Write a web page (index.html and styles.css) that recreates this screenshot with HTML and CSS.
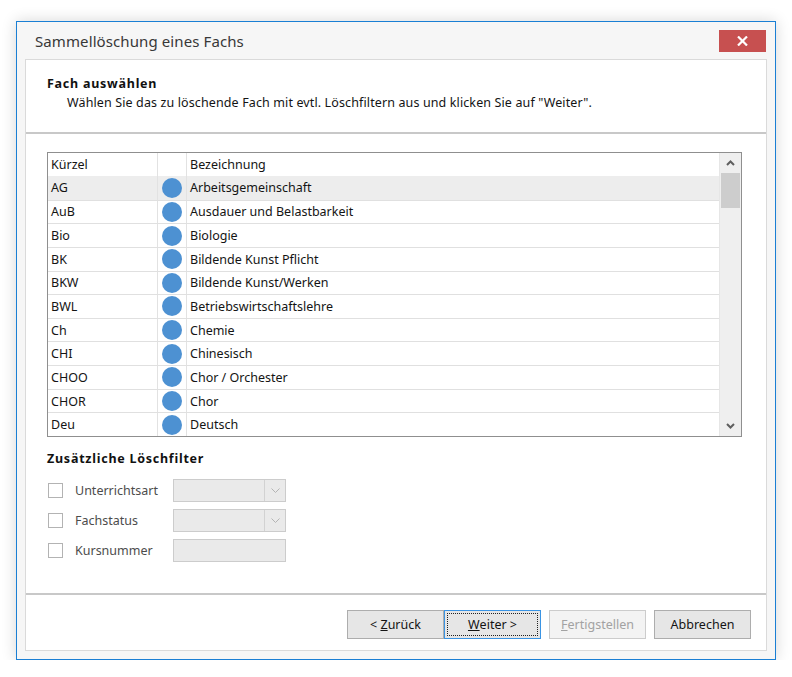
FILE: index.html
```html
<!DOCTYPE html>
<html lang="de">
<head>
    <meta charset="UTF-8">
    <title>Sammellöschung eines Fachs</title>
    <link rel="stylesheet" href="styles.css">
</head>
<body>
    <div class="window">
        <div class="titlebar">
            <span class="title">Sammellöschung eines Fachs</span>
            <button class="close">
                <svg width="11" height="10" viewBox="0 0 11 10"><path d="M1 0.5 L10 9.5 M10 0.5 L1 9.5" stroke="#fff" stroke-width="2.2" fill="none"/></svg>
            </button>
        </div>

        <div class="panel">
            <div class="header">
                <div class="header-title">Fach auswählen</div>
                <div class="header-text">Wählen Sie das zu löschende Fach mit evtl. Löschfiltern aus und klicken Sie auf "Weiter".</div>
            </div>

            <div class="content">
                <div class="grid">
                    <div class="grid-main">
                        <div class="row head"><div class="c-code">Kürzel</div><div class="c-icon"></div><div class="c-name">Bezeichnung</div></div>
                        <div class="row selected"><div class="c-code">AG</div><div class="c-icon"><span class="dot"></span></div><div class="c-name">Arbeitsgemeinschaft</div></div>
                        <div class="row"><div class="c-code">AuB</div><div class="c-icon"><span class="dot"></span></div><div class="c-name">Ausdauer und Belastbarkeit</div></div>
                        <div class="row"><div class="c-code">Bio</div><div class="c-icon"><span class="dot"></span></div><div class="c-name">Biologie</div></div>
                        <div class="row"><div class="c-code">BK</div><div class="c-icon"><span class="dot"></span></div><div class="c-name">Bildende Kunst Pflicht</div></div>
                        <div class="row"><div class="c-code">BKW</div><div class="c-icon"><span class="dot"></span></div><div class="c-name">Bildende Kunst/Werken</div></div>
                        <div class="row"><div class="c-code">BWL</div><div class="c-icon"><span class="dot"></span></div><div class="c-name">Betriebswirtschaftslehre</div></div>
                        <div class="row"><div class="c-code">Ch</div><div class="c-icon"><span class="dot"></span></div><div class="c-name">Chemie</div></div>
                        <div class="row"><div class="c-code">CHI</div><div class="c-icon"><span class="dot"></span></div><div class="c-name">Chinesisch</div></div>
                        <div class="row"><div class="c-code">CHOO</div><div class="c-icon"><span class="dot"></span></div><div class="c-name">Chor / Orchester</div></div>
                        <div class="row"><div class="c-code">CHOR</div><div class="c-icon"><span class="dot"></span></div><div class="c-name">Chor</div></div>
                        <div class="row"><div class="c-code">Deu</div><div class="c-icon"><span class="dot"></span></div><div class="c-name">Deutsch</div></div>
                    </div>
                    <div class="scrollbar">
                        <div class="sb-btn">
                            <svg width="9" height="6" viewBox="0 0 9 6"><path d="M1 5 L4.5 1.5 L8 5" stroke="#5f5f5f" stroke-width="2" fill="none"/></svg>
                        </div>
                        <div class="sb-thumb"></div>
                        <div class="sb-track"></div>
                        <div class="sb-btn">
                            <svg width="9" height="6" viewBox="0 0 9 6"><path d="M1 1 L4.5 4.5 L8 1" stroke="#5f5f5f" stroke-width="2" fill="none"/></svg>
                        </div>
                    </div>
                </div>

                <div class="filters">
                    <div class="filters-title">Zusätzliche Löschfilter</div>
                    <div class="filter-row">
                        <span class="check"></span>
                        <span class="filter-label">Unterrichtsart</span>
                        <span class="combo"><span class="combo-btn"><svg width="9" height="5" viewBox="0 0 9 5"><path d="M0.5 0.5 L4.5 4.5 L8.5 0.5" stroke="#b4b4b4" stroke-width="1" fill="none"/></svg></span></span>
                    </div>
                    <div class="filter-row">
                        <span class="check"></span>
                        <span class="filter-label">Fachstatus</span>
                        <span class="combo"><span class="combo-btn"><svg width="9" height="5" viewBox="0 0 9 5"><path d="M0.5 0.5 L4.5 4.5 L8.5 0.5" stroke="#b4b4b4" stroke-width="1" fill="none"/></svg></span></span>
                    </div>
                    <div class="filter-row">
                        <span class="check"></span>
                        <span class="filter-label">Kursnummer</span>
                        <span class="combo"></span>
                    </div>
                </div>
            </div>

            <div class="buttons">
                <button class="btn">&lt; <u>Z</u>urück</button>
                <button class="btn focused"><span class="focus-ring"><u>W</u>eiter &gt;</span></button>
                <button class="btn disabled"><u>F</u>ertigstellen</button>
                <button class="btn">Abbrechen</button>
            </div>
        </div>
    </div>
</body>
</html>
```

FILE: styles.css
```css
* {
    box-sizing: border-box;
}

body {
    margin: 0;
    background: #ffffff;
    font-family: "Noto Sans", "Open Sans", sans-serif;
    font-size: 12.5px;
    color: #141414;
}

.window {
    margin: 21px 0 0 16px;
    width: 760px;
    height: 639px;
    border: 1px solid #1a7fd4;
    background: #f6f6f6;
    display: flex;
    flex-direction: column;
    box-shadow: 0 0 14px rgba(0, 0, 0, 0.16);
}

.titlebar {
    height: 37px;
    display: flex;
    align-items: center;
    justify-content: space-between;
    padding: 0 9px 0 18px;
}

.title {
    font-size: 15px;
    letter-spacing: 0.1px;
    color: #383838;
}

.close {
    width: 47px;
    height: 22px;
    border: 0;
    padding: 0;
    background: #c75050;
    display: flex;
    align-items: center;
    justify-content: center;
}

.panel {
    flex: 1;
    margin: 0 8px 8px;
    background: #ffffff;
    border: 1px solid #dadada;
    display: flex;
    flex-direction: column;
}

.header {
    height: 74px;
    padding: 16px 0 0 21px;
    border-bottom: 2px solid #c8c8c8;
    line-height: 16px;
}

.header-title {
    font-weight: bold;
    letter-spacing: 0.75px;
    color: #111;
    margin-bottom: 3px;
}

.header-text {
    padding-left: 20px;
    letter-spacing: 0.12px;
}

.content {
    flex: 1;
    padding: 18px 24px 0 21px;
    border-bottom: 2px solid #c8c8c8;
}

/* Tabelle */
.grid {
    display: flex;
    height: 285px;
    border: 1px solid #8f8f8f;
}

.grid-main {
    flex: 1;
    display: grid;
    grid-template-rows: 23px repeat(11, 1fr);
    border-right: 1px solid #e6e6e6;
}

.row {
    display: flex;
    align-items: stretch;
    border-top: 1px solid #e0e0e0;
}

.row.head,
.row.selected {
    border-top: 0;
}

.row.selected {
    background: #ededed;
}

.row > div {
    display: flex;
    align-items: center;
    padding-left: 3px;
    border-right: 1px solid #e2e2e2;
}

.c-code {
    width: 110px;
}

.row > .c-icon {
    width: 29px;
    padding-left: 0;
    justify-content: center;
}

.row > .c-name {
    flex: 1;
    border-right: 0;
}

.dot {
    width: 20px;
    height: 20px;
    border-radius: 50%;
    background: #4d91d2;
}

.scrollbar {
    width: 21px;
    background: #efefef;
    display: flex;
    flex-direction: column;
}

.sb-btn {
    height: 20px;
    display: flex;
    align-items: center;
    justify-content: center;
}

.sb-thumb {
    height: 35px;
    margin: 0 1px;
    background: #cdcdcd;
}

.sb-track {
    flex: 1;
}

/* Filter */
.filters-title {
    margin-top: 14px;
    line-height: 16px;
    font-weight: bold;
    letter-spacing: 0.75px;
    color: #111;
}

.filter-row {
    display: flex;
    align-items: center;
    height: 23px;
    margin-top: 7px;
}

.filters-title + .filter-row {
    margin-top: 12px;
}

.check {
    width: 15px;
    height: 15px;
    margin-left: 1px;
    border: 1px solid #b3b3b3;
    background: #fff;
}

.filter-label {
    width: 98px;
    margin-left: 12px;
    color: #4c4c4c;
}

.combo {
    width: 113px;
    height: 23px;
    border: 1px solid #cccccc;
    background: #eaeaea;
    display: flex;
    justify-content: flex-end;
}

.combo-btn {
    width: 21px;
    border-left: 1px solid #d2d2d2;
    display: flex;
    align-items: center;
    justify-content: center;
}

/* Schaltflächen */
.buttons {
    height: 55px;
    display: flex;
    justify-content: flex-end;
    align-items: flex-start;
    padding: 15px 15px 0 0;
}

.btn {
    width: 97px;
    height: 29px;
    margin-left: 8px;
    padding: 0;
    border: 1px solid #adadad;
    background: #e6e6e6;
    font-family: inherit;
    font-size: 12.5px;
    color: #141414;
}

.btn.focused {
    margin-left: 0;
    border-color: #3a94e4;
    padding: 2px;
}

.focus-ring {
    display: flex;
    align-items: center;
    justify-content: center;
    height: 100%;
    border: 1px dotted #222;
}

.btn.disabled {
    background: #f3f3f3;
    border-color: #cccccc;
    color: #a2a2a2;
}
```
